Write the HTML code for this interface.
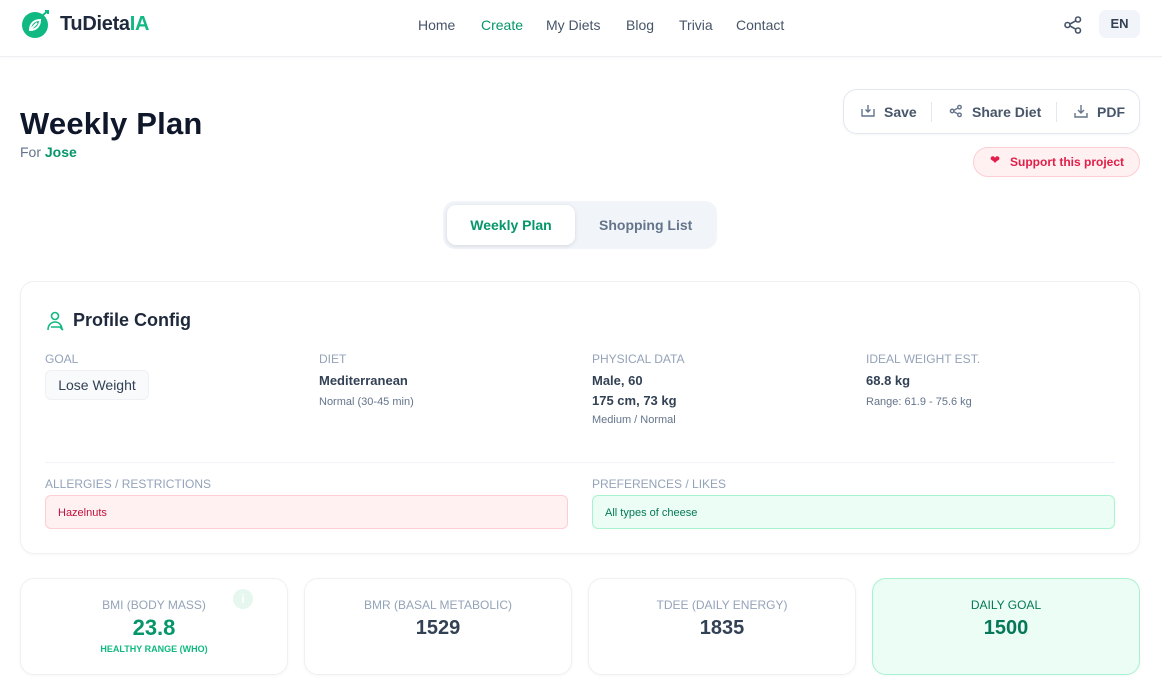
<!DOCTYPE html>
<html><head><meta charset="utf-8"><style>
*{box-sizing:border-box;margin:0;padding:0}
body{width:1162px;height:699px;overflow:hidden;background:#fff;font-family:"Liberation Sans",sans-serif;color:#0f172a;position:relative}
.abs{position:absolute}
.nav{top:0;left:0;width:1162px;height:57px;border-bottom:1px solid #eef0f4;box-shadow:0 1px 3px rgba(0,0,0,.03)}
.logo{left:60px;top:13px;font-size:20px;font-weight:700;color:#1e293b;letter-spacing:-0.3px}
.links a{position:absolute;top:17px;font-size:14px;color:#475569;text-decoration:none}
.lbl{font-size:12px;color:#94a3b8;text-transform:uppercase}
.card{border:1px solid #eef0f4;border-radius:14px;box-shadow:0 1px 3px rgba(0,0,0,.04);background:#fff}
.stat{top:578px;width:268px;height:97px;text-align:center}
.stat .t{font-size:12px;color:#94a3b8;margin-top:19px}
.stat .v{font-size:20px;font-weight:700;color:#334155;margin-top:5px}
</style></head><body>
<div class="abs nav"></div>
<svg class="abs" style="left:21px;top:9px" width="30" height="30" viewBox="0 0 30 30"><circle cx="14" cy="16" r="13" fill="#10b981"/><path d="M9 21c0-6 4-10 10-10 0 6-4 10-10 10zM10 20l6-6" stroke="#fff" stroke-width="2" fill="none"/><path d="M22 6l5-4M24 2h3v3" stroke="#10b981" stroke-width="2" fill="none"/></svg>
<div class="abs logo">TuDieta<span style="color:#10b981">IA</span></div>
<div class="links"><a style="left:418px">Home</a><a style="left:481px;color:#059669">Create</a><a style="left:546px">My Diets</a><a style="left:626px">Blog</a><a style="left:679px">Trivia</a><a style="left:736px">Contact</a></div>
<svg class="abs" style="left:1063px;top:15px" width="20" height="20" viewBox="0 0 20 20" fill="none" stroke="#475569" stroke-width="1.6"><circle cx="15" cy="4.5" r="2.5"/><circle cx="4.5" cy="10" r="2.5"/><circle cx="15" cy="15.5" r="2.5"/><path d="M7 9l5.8-3.2M7 11l5.8 3.2"/></svg>
<div class="abs" style="left:1099px;top:10px;width:41px;height:28px;background:#f1f5f9;border-radius:7px;font-size:13px;font-weight:700;color:#334155;text-align:center;line-height:28px">EN</div>

<div class="abs" style="left:20px;top:106px;font-size:31px;font-weight:900;color:#0f172a;letter-spacing:0.2px">Weekly Plan</div>
<div class="abs" style="left:20px;top:144px;font-size:14px;color:#64748b">For <span style="color:#059669;font-weight:700">Jose</span></div>

<div class="abs card" style="left:843px;top:89px;width:297px;height:45px;border-color:#e2e8f0"></div>
<svg class="abs" style="left:861px;top:104px" width="14" height="14" viewBox="0 0 14 14" fill="none" stroke="#64748b" stroke-width="1.4"><path d="M1 5v7h12V5M7 1v7M4.5 5.5L7 8l2.5-2.5"/></svg>
<div class="abs" style="left:884px;top:104px;font-size:14px;font-weight:700;color:#475569">Save</div>
<div class="abs" style="left:931px;top:102px;width:1px;height:20px;background:#e2e8f0"></div>
<svg class="abs" style="left:949px;top:104px" width="14" height="14" viewBox="0 0 20 20" fill="none" stroke="#64748b" stroke-width="2"><circle cx="15" cy="4.5" r="2.5"/><circle cx="4.5" cy="10" r="2.5"/><circle cx="15" cy="15.5" r="2.5"/><path d="M7 9l5.8-3.2M7 11l5.8 3.2"/></svg>
<div class="abs" style="left:972px;top:104px;font-size:14px;font-weight:700;color:#475569">Share Diet</div>
<div class="abs" style="left:1056px;top:102px;width:1px;height:20px;background:#e2e8f0"></div>
<svg class="abs" style="left:1074px;top:104px" width="14" height="14" viewBox="0 0 14 14" fill="none" stroke="#64748b" stroke-width="1.4"><path d="M1 9v4h12V9M7 1v8M4 6l3 3 3-3"/></svg>
<div class="abs" style="left:1097px;top:104px;font-size:14px;font-weight:700;color:#475569">PDF</div>

<div class="abs" style="left:973px;top:147px;width:167px;height:30px;background:#fff1f2;border:1px solid #fecdd3;border-radius:15px;font-size:12px;font-weight:700;color:#e11d48;line-height:28px;padding-left:36px">Support this project</div>
<div class="abs" style="left:990px;top:153px;font-size:12px;color:#e11d48">&#10084;</div>

<div class="abs" style="left:443px;top:201px;width:274px;height:48px;background:#f1f5f9;border-radius:12px"></div>
<div class="abs" style="left:447px;top:205px;width:128px;height:40px;background:#fff;border-radius:9px;box-shadow:0 1px 4px rgba(0,0,0,.12);font-size:14px;font-weight:700;color:#059669;text-align:center;line-height:40px">Weekly Plan</div>
<div class="abs" style="left:599px;top:217px;font-size:14px;font-weight:700;color:#64748b">Shopping List</div>

<div class="abs card" style="left:20px;top:281px;width:1120px;height:273px"></div>
<svg class="abs" style="left:45px;top:311px" width="20" height="20" viewBox="0 0 20 20" fill="none" stroke="#10b981" stroke-width="1.6"><circle cx="10" cy="5" r="3.5"/><path d="M3 19c0-5 3-8 7-8s7 3 7 8M6 16h9l3 3"/></svg>
<div class="abs" style="left:73px;top:310px;font-size:18px;font-weight:700;color:#1e293b">Profile Config</div>
<div class="abs lbl" style="left:45px;top:352px">Goal</div>
<div class="abs" style="left:45px;top:370px;width:104px;height:30px;background:#f8fafc;border:1px solid #eef0f4;border-radius:6px;font-size:14px;color:#334155;text-align:center;line-height:28px">Lose Weight</div>
<div class="abs lbl" style="left:319px;top:352px">Diet</div>
<div class="abs" style="left:319px;top:373px;font-size:13px;font-weight:700;color:#334155">Mediterranean</div>
<div class="abs" style="left:319px;top:396px;font-size:11px;color:#64748b">Normal (30-45 min)</div>
<div class="abs lbl" style="left:592px;top:352px">Physical Data</div>
<div class="abs" style="left:592px;top:371px;font-size:13px;font-weight:700;color:#334155;line-height:20px">Male, 60<br>175 cm, 73 kg</div>
<div class="abs" style="left:592px;top:414px;font-size:11px;color:#64748b">Medium / Normal</div>
<div class="abs lbl" style="left:866px;top:352px">Ideal Weight Est.</div>
<div class="abs" style="left:866px;top:373px;font-size:13px;font-weight:700;color:#334155">68.8 kg</div>
<div class="abs" style="left:866px;top:396px;font-size:11px;color:#64748b">Range: 61.9 - 75.6 kg</div>
<div class="abs" style="left:45px;top:462px;width:1070px;height:1px;background:#f1f5f9"></div>
<div class="abs lbl" style="left:45px;top:477px">Allergies / Restrictions</div>
<div class="abs" style="left:45px;top:495px;width:523px;height:34px;background:#fff1f2;border:1px solid #fecdd3;border-radius:6px;font-size:11px;color:#be123c;line-height:34px;padding-left:12px">Hazelnuts</div>
<div class="abs lbl" style="left:592px;top:477px">Preferences / Likes</div>
<div class="abs" style="left:592px;top:495px;width:523px;height:34px;background:#ecfdf5;border:1px solid #a7f3d0;border-radius:6px;font-size:11px;color:#047857;line-height:34px;padding-left:12px">All types of cheese</div>

<div class="abs card stat" style="left:20px"><div class="t">BMI (BODY MASS)</div><div class="v" style="color:#059669;font-size:22px;margin-top:3px">23.8</div><div style="font-size:9px;font-weight:700;color:#10b981;margin-top:3px">HEALTHY RANGE (WHO)</div></div>
<div class="abs" style="left:233px;top:589px;width:20px;height:20px;border-radius:50%;background:#e6f7ef;color:#fff;font-size:12px;font-weight:700;text-align:center;line-height:20px">i</div>
<div class="abs card stat" style="left:304px"><div class="t">BMR (BASAL METABOLIC)</div><div class="v">1529</div></div>
<div class="abs card stat" style="left:588px"><div class="t">TDEE (DAILY ENERGY)</div><div class="v">1835</div></div>
<div class="abs card stat" style="left:872px;background:#ecfdf5;border-color:#a7f3d0"><div class="t" style="color:#047857">DAILY GOAL</div><div class="v" style="color:#047857">1500</div></div>
</body></html>
